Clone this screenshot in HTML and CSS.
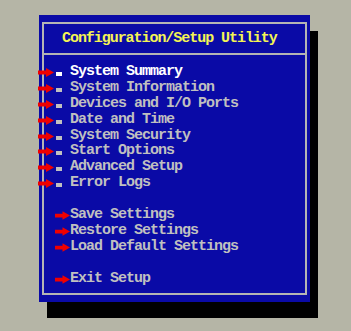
FILE: index.html
```html
<!DOCTYPE html>
<html lang="en">
    <head>
        <meta charset="UTF-8" />
        <meta name="viewport" content="width=device-width, initial-scale=1.0" />
        <title>Configuration/Setup Utility</title>
        <link rel="stylesheet" href="styles.css">
    </head>
    <body>
        <div class="panel">
            <div class="frame">
                <h1 class="title">Configuration/Setup Utility</h1>

                <ul class="menu">
                    <li class="item active">
                        <svg class="arrow" viewBox="0 0 16 9"><polygon points="0,2.5 8,2.5 8,0 16,4.5 8,9 8,6.5 0,6.5" /></svg>
                        <span class="bullet"></span><span class="label">System Summary</span>
                    </li>
                    <li class="item">
                        <svg class="arrow" viewBox="0 0 16 9"><polygon points="0,2.5 8,2.5 8,0 16,4.5 8,9 8,6.5 0,6.5" /></svg>
                        <span class="bullet"></span><span class="label">System Information</span>
                    </li>
                    <li class="item">
                        <svg class="arrow" viewBox="0 0 16 9"><polygon points="0,2.5 8,2.5 8,0 16,4.5 8,9 8,6.5 0,6.5" /></svg>
                        <span class="bullet"></span><span class="label">Devices and I/O Ports</span>
                    </li>
                    <li class="item">
                        <svg class="arrow" viewBox="0 0 16 9"><polygon points="0,2.5 8,2.5 8,0 16,4.5 8,9 8,6.5 0,6.5" /></svg>
                        <span class="bullet"></span><span class="label">Date and Time</span>
                    </li>
                    <li class="item">
                        <svg class="arrow" viewBox="0 0 16 9"><polygon points="0,2.5 8,2.5 8,0 16,4.5 8,9 8,6.5 0,6.5" /></svg>
                        <span class="bullet"></span><span class="label">System Security</span>
                    </li>
                    <li class="item">
                        <svg class="arrow" viewBox="0 0 16 9"><polygon points="0,2.5 8,2.5 8,0 16,4.5 8,9 8,6.5 0,6.5" /></svg>
                        <span class="bullet"></span><span class="label">Start Options</span>
                    </li>
                    <li class="item">
                        <svg class="arrow" viewBox="0 0 16 9"><polygon points="0,2.5 8,2.5 8,0 16,4.5 8,9 8,6.5 0,6.5" /></svg>
                        <span class="bullet"></span><span class="label">Advanced Setup</span>
                    </li>
                    <li class="item">
                        <svg class="arrow" viewBox="0 0 16 9"><polygon points="0,2.5 8,2.5 8,0 16,4.5 8,9 8,6.5 0,6.5" /></svg>
                        <span class="bullet"></span><span class="label">Error Logs</span>
                    </li>

                    <li class="item action gap">
                        <svg class="arrow" viewBox="0 0 16 9"><polygon points="0,2.5 8,2.5 8,0 16,4.5 8,9 8,6.5 0,6.5" /></svg>
                        <span class="label">Save Settings</span>
                    </li>
                    <li class="item action">
                        <svg class="arrow" viewBox="0 0 16 9"><polygon points="0,2.5 8,2.5 8,0 16,4.5 8,9 8,6.5 0,6.5" /></svg>
                        <span class="label">Restore Settings</span>
                    </li>
                    <li class="item action">
                        <svg class="arrow" viewBox="0 0 16 9"><polygon points="0,2.5 8,2.5 8,0 16,4.5 8,9 8,6.5 0,6.5" /></svg>
                        <span class="label">Load Default Settings</span>
                    </li>

                    <li class="item action gap">
                        <svg class="arrow" viewBox="0 0 16 9"><polygon points="0,2.5 8,2.5 8,0 16,4.5 8,9 8,6.5 0,6.5" /></svg>
                        <span class="label">Exit Setup</span>
                    </li>
                </ul>
            </div>
        </div>
    </body>
</html>
```
FILE: styles.css
```css
body {
    margin: 0;
    padding: 15px 0 0 39px;
    background-color: #b5b5a6;
    font-family: "Liberation Mono", "DejaVu Sans Mono", monospace;
    height: 331px;
    box-sizing: border-box;
    overflow: hidden;
}
.panel {
    width: 271px;
    height: 287px;
    box-sizing: border-box;
    padding: 7px 3px;
    background-color: #0a0aa6;
    box-shadow: 8px 16px 0 #000;
}
.frame {
    height: 100%;
    box-sizing: border-box;
    border: 2px solid #b4b4b4;
}
.title {
    margin: 0;
    height: 29px;
    padding-left: 18px;
    line-height: 29px;
    font-size: 15px;
    font-weight: bold;
    letter-spacing: -1.05px;
    color: #f4f454;
    border-bottom: 2px solid #b4b4b4;
}
.menu {
    list-style: none;
    margin: 0;
    padding: 9px 0 0 0;
}
.item {
    display: flex;
    align-items: flex-start;
    height: 15.9px;
    line-height: 15.9px;
    font-size: 15px;
    font-weight: bold;
    letter-spacing: -1px;
    color: #c0c0c0;
    white-space: nowrap;
}
.item.active {
    color: #ffffff;
}
.arrow {
    flex: none;
    width: 16px;
    height: 9px;
    margin: 4px 0 0 -6px;
    fill: #f00000;
}
.bullet {
    flex: none;
    width: 6px;
    height: 4px;
    margin: 8px 8px 0 2px;
    background-color: #c0c0c0;
}
.active .bullet {
    background-color: #ffffff;
}
.action .arrow {
    width: 15px;
    margin-left: 11px;
}
.gap {
    margin-top: 15.9px;
}
```
